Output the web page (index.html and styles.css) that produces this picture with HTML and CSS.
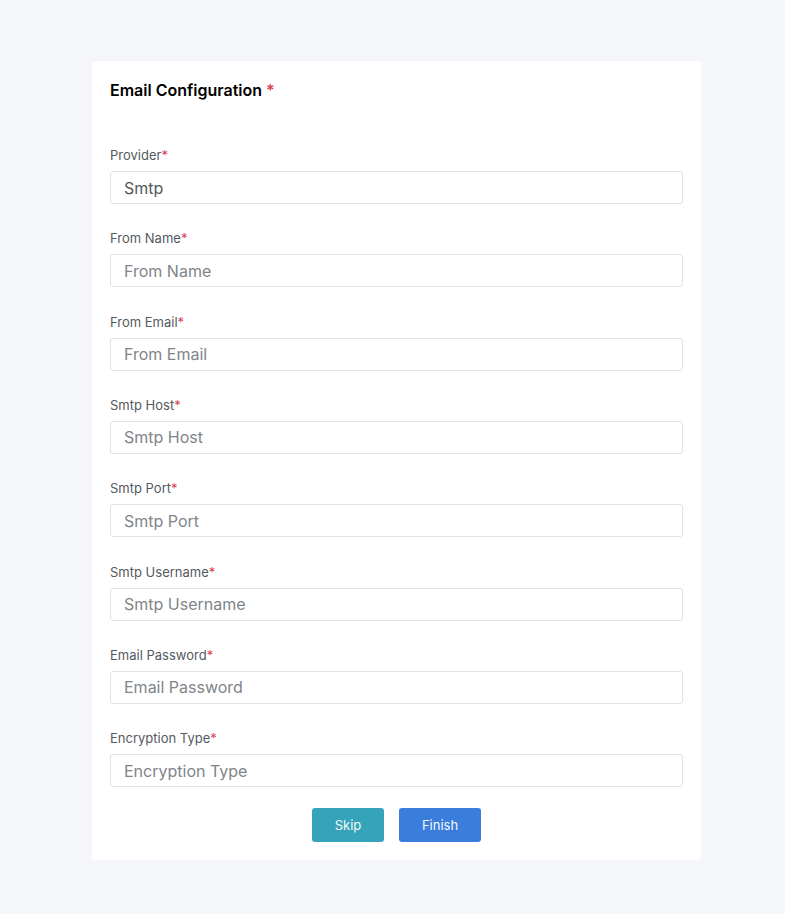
FILE: index.html
```html
<!DOCTYPE html>
<html>
<head>
<meta charset="utf-8">
<link rel="stylesheet" href="styles.css">
</head>
<body>
<div class="page">
  <div class="card">
    <h1 class="title">Email Configuration <span class="req">*</span></h1>
    <form class="form">
      <div class="field"><label class="label">Provider<span class="req">*</span></label><input class="input filled" value="Smtp"></div>
      <div class="field"><label class="label">From Name<span class="req">*</span></label><input class="input" placeholder="From Name"></div>
      <div class="field"><label class="label">From Email<span class="req">*</span></label><input class="input" placeholder="From Email"></div>
      <div class="field"><label class="label">Smtp Host<span class="req">*</span></label><input class="input" placeholder="Smtp Host"></div>
      <div class="field"><label class="label">Smtp Port<span class="req">*</span></label><input class="input" placeholder="Smtp Port"></div>
      <div class="field"><label class="label">Smtp Username<span class="req">*</span></label><input class="input" placeholder="Smtp Username"></div>
      <div class="field"><label class="label">Email Password<span class="req">*</span></label><input class="input" placeholder="Email Password"></div>
      <div class="field field-last"><label class="label">Encryption Type<span class="req">*</span></label><input class="input" placeholder="Encryption Type"></div>
      <div class="actions">
        <button type="button" class="btn skip">Skip</button>
        <button type="button" class="btn finish">Finish</button>
      </div>
    </form>
  </div>
</div>
</body>
</html>
```
FILE: styles.css
```css
* { box-sizing: border-box; }
html, body { margin: 0; padding: 0; }
body {
  background: #f5f6fa;
  font-family: Inter, "Noto Sans", sans-serif;
  color: #222;
}
.page {
  padding-top: 61px;
  padding-left: 8px;
  display: flex;
  justify-content: center;
}
.card {
  width: 609px;
  background: #fff;
  border-radius: 3px;
  padding: 20px 18px 18px 18px;
}
.title {
  margin: 0;
  font-size: 16px;
  font-weight: 600;
  line-height: 19px;
  color: #000;
}
.req { color: #e0404f; }
.form {
  margin-top: 47px;
  display: flex;
  flex-direction: column;
}
.field {
  display: flex;
  flex-direction: column;
  margin-bottom: 26.33px;
}
.field-last { margin-bottom: 0; }
.label {
  font-size: 13px;
  line-height: 16px;
  color: #55595e;
  margin-bottom: 8px;
}
.input {
  height: 33px;
  width: 100%;
  border: 1px solid #dfe2e6;
  border-radius: 3px;
  padding: 0 13px;
  font-family: Inter, "Noto Sans", sans-serif;
  font-size: 16px;
  color: #52575c;
  outline: none;
  background: #fff;
}
.input::placeholder { color: #80858a; }
.actions {
  margin-top: 21px;
  display: flex;
  justify-content: center;
  gap: 15px;
}
.btn {
  height: 34px;
  border: none;
  border-radius: 3px;
  color: #f4f8fb;
  font-family: Inter, "Noto Sans", sans-serif;
  font-size: 13px;
  cursor: pointer;
}
.skip { width: 72px; background: #35a3b9; }
.finish { width: 82px; background: #3b7ddd; }
```
